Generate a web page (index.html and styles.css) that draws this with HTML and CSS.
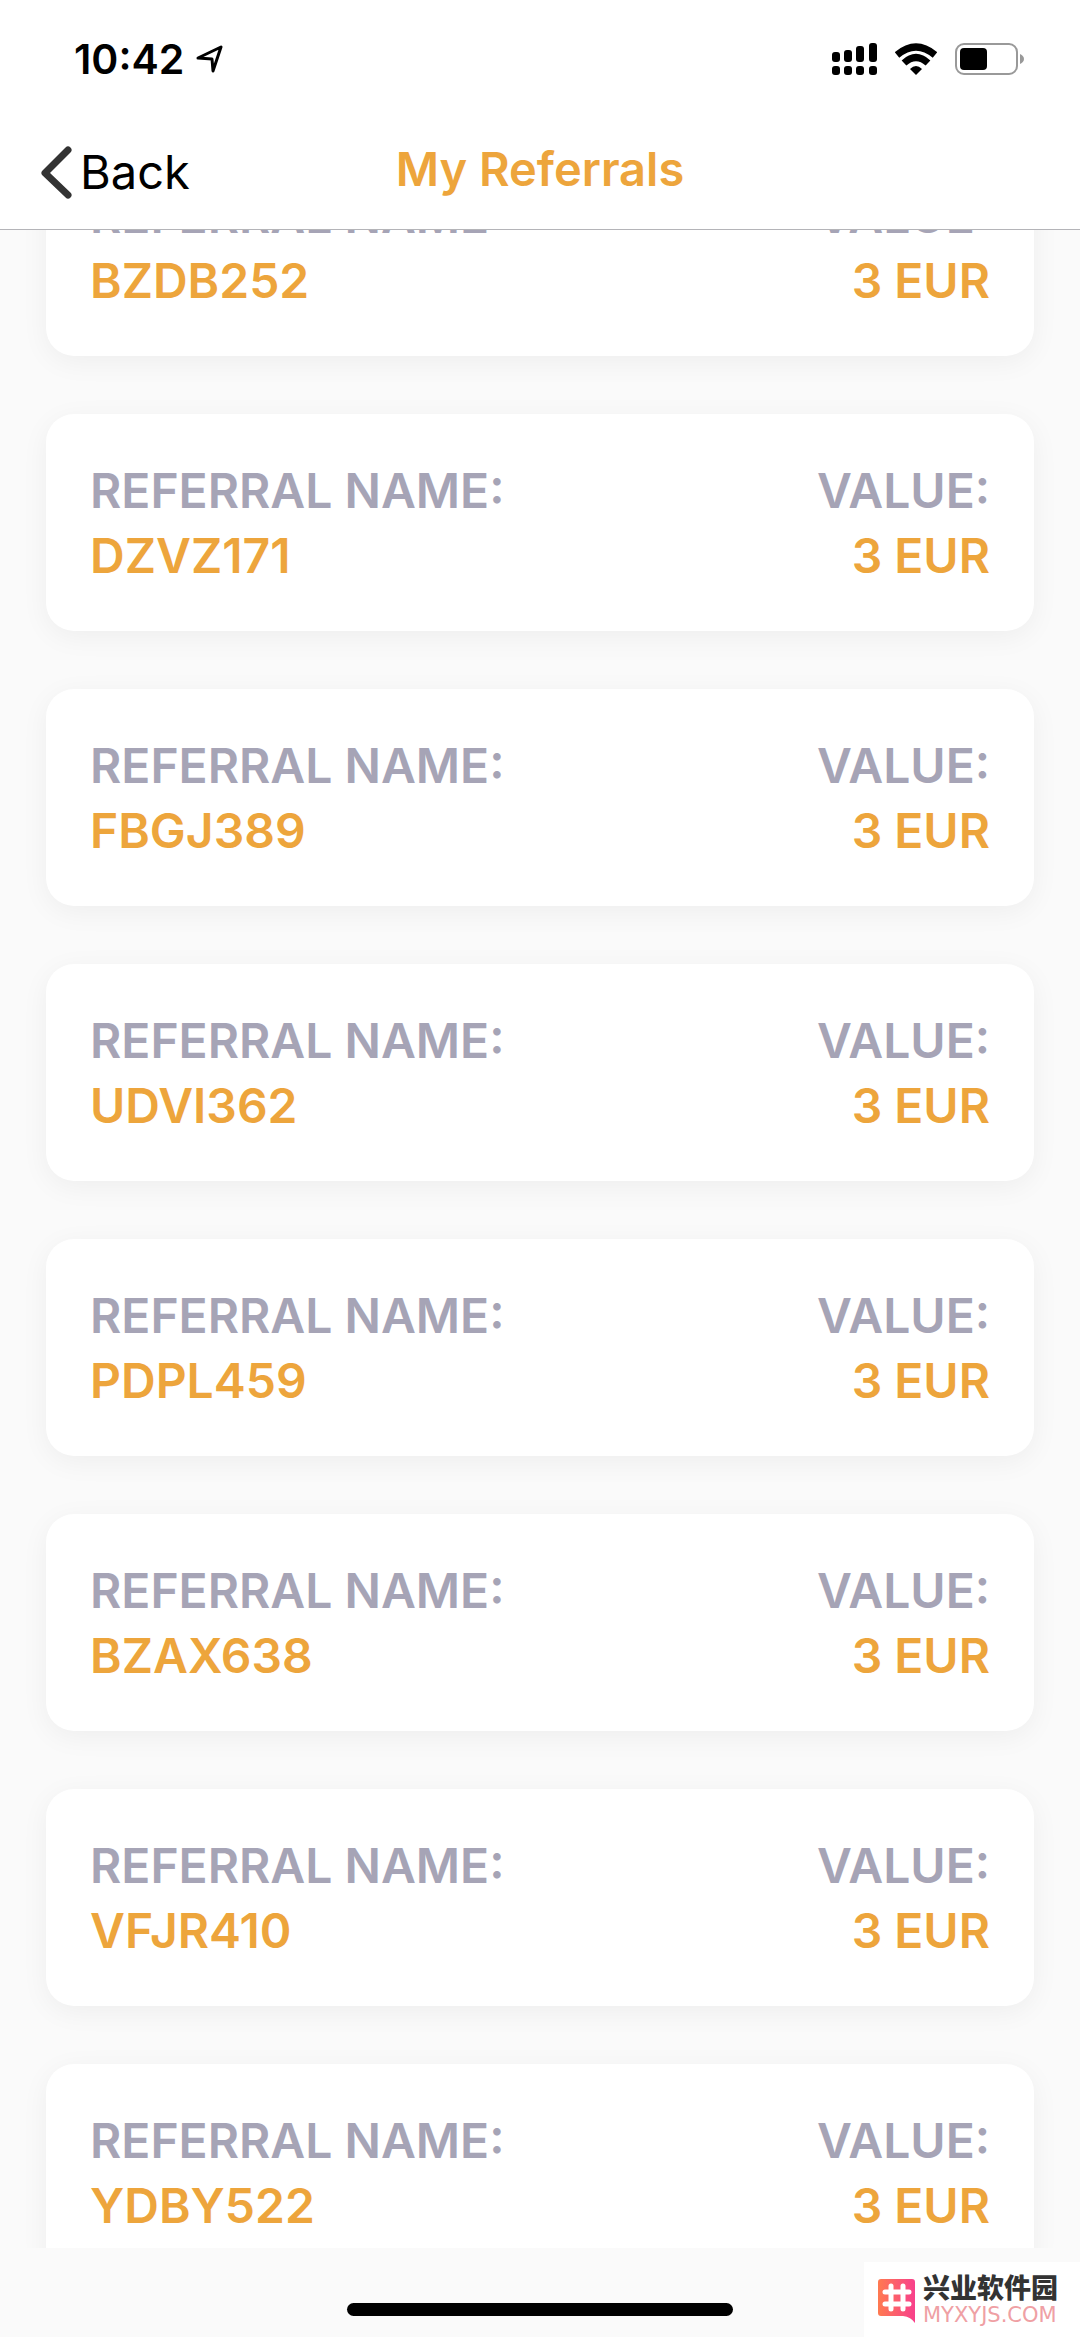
FILE: index.html
```html
<!DOCTYPE html>
<html lang="en">
<head>
    <meta charset="UTF-8">
    <meta name="viewport" content="width=device-width, initial-scale=1.0">
    <title>My Referrals</title>
    <link rel="stylesheet" href="styles.css">
</head>
<body>
    <header class="top">
        <div class="status-bar">
            <div class="status-left">
                <span class="clock">10:42</span>
                <svg class="icon-location" width="28" height="30" viewBox="0 0 28 30" fill="none" stroke="#000" stroke-width="3" stroke-linejoin="round">
                    <path d="M2 14L25 3L17 27L16 15Z"/>
                </svg>
            </div>
            <div class="status-right">
                <svg width="45" height="32" viewBox="0 0 45 32">
                    <rect x="0" y="9" width="8" height="10" rx="3"/>
                    <rect x="12" y="7" width="8" height="12" rx="3"/>
                    <rect x="24" y="3" width="8" height="16" rx="3"/>
                    <rect x="37" y="0" width="8" height="19" rx="3"/>
                    <rect x="0" y="23" width="8" height="9" rx="3"/>
                    <rect x="12" y="23" width="8" height="9" rx="3"/>
                    <rect x="24" y="23" width="8" height="9" rx="3"/>
                    <rect x="37" y="23" width="8" height="9" rx="3"/>
                </svg>
                <svg width="42" height="32" viewBox="0 0 42 32">
                    <path d="M2 12Q21 -4 40 12" fill="none" stroke="#000" stroke-width="7"/>
                    <path d="M9 20Q21 9 33 20" fill="none" stroke="#000" stroke-width="7"/>
                    <path d="M15 26Q21 20 27 26L21 32Z"/>
                </svg>
                <svg width="69" height="32" viewBox="0 0 69 32">
                    <rect x="1" y="1" width="61" height="30" rx="8" fill="none" stroke="#999" stroke-width="2"/>
                    <rect x="5" y="5" width="27" height="22" rx="4"/>
                    <path d="M65 11Q69 13 69 16Q69 19 65 21Z" fill="#999"/>
                </svg>
            </div>
        </div>
        <nav class="nav-bar">
            <a class="back" href="#">
                <svg width="32" height="54" viewBox="0 0 32 54" fill="none" stroke="#333" stroke-width="7" stroke-linecap="round" stroke-linejoin="round">
                    <path d="M28 5L5 28L28 50"/>
                </svg>
                <span>Back</span>
            </a>
            <h1>My Referrals</h1>
        </nav>
    </header>

    <main>
        <ul class="referrals">
            <li class="card">
                <div class="name"><p class="label">REFERRAL NAME:</p><p>BZDB252</p></div>
                <div class="value"><p class="label">VALUE:</p><p>3 EUR</p></div>
            </li>
            <li class="card">
                <div class="name"><p class="label">REFERRAL NAME:</p><p>DZVZ171</p></div>
                <div class="value"><p class="label">VALUE:</p><p>3 EUR</p></div>
            </li>
            <li class="card">
                <div class="name"><p class="label">REFERRAL NAME:</p><p>FBGJ389</p></div>
                <div class="value"><p class="label">VALUE:</p><p>3 EUR</p></div>
            </li>
            <li class="card">
                <div class="name"><p class="label">REFERRAL NAME:</p><p>UDVI362</p></div>
                <div class="value"><p class="label">VALUE:</p><p>3 EUR</p></div>
            </li>
            <li class="card">
                <div class="name"><p class="label">REFERRAL NAME:</p><p>PDPL459</p></div>
                <div class="value"><p class="label">VALUE:</p><p>3 EUR</p></div>
            </li>
            <li class="card">
                <div class="name"><p class="label">REFERRAL NAME:</p><p>BZAX638</p></div>
                <div class="value"><p class="label">VALUE:</p><p>3 EUR</p></div>
            </li>
            <li class="card">
                <div class="name"><p class="label">REFERRAL NAME:</p><p>VFJR410</p></div>
                <div class="value"><p class="label">VALUE:</p><p>3 EUR</p></div>
            </li>
            <li class="card">
                <div class="name"><p class="label">REFERRAL NAME:</p><p>YDBY522</p></div>
                <div class="value"><p class="label">VALUE:</p><p>3 EUR</p></div>
            </li>
        </ul>
    </main>

    <footer class="home-area">
        <div class="home-bar"></div>
        <div class="watermark">
            <svg width="37" height="44" viewBox="0 0 37 44">
                <defs>
                    <linearGradient id="badge" x1="0" y1="0" x2="1" y2="0">
                        <stop offset="0" stop-color="#ff7a50"/>
                        <stop offset="1" stop-color="#f8408c"/>
                    </linearGradient>
                </defs>
                <path d="M3 0H34Q37 0 37 3V44Q33 38 25 37H3Q0 37 0 34V3Q0 0 3 0Z" fill="url(#badge)"/>
                <path d="M13 7V30M25 7V30M7 13H31M7 25H31" fill="none" stroke="#fff" stroke-width="5" stroke-linecap="round"/>
            </svg>
            <div class="watermark-text">
                <span class="site-name" lang="zh-CN">兴业软件园</span>
                <span class="site-url">MYXYJS.COM</span>
            </div>
        </div>
    </footer>
</body>
</html>
```
FILE: styles.css
```css
:root {
    --orange: #EDA53C;
    --label: #A6A4B6;
    --page: #FAFAFA;
}

* {
    box-sizing: border-box;
}

body {
    margin: 0;
    height: 100vh;
    display: flex;
    flex-direction: column;
    background: var(--page);
    font-family: Inter, "Noto Sans CJK SC", sans-serif;
    overflow: hidden;
}

h1, p, ul {
    margin: 0;
    padding: 0;
}

/* header */
.top {
    flex: none;
    background: #fff;
    border-bottom: 1px solid #B4B4B8;
}

.status-bar {
    display: flex;
    justify-content: space-between;
    align-items: center;
    height: 118px;
    padding: 0 56px 0 74px;
}

.status-left {
    display: flex;
    align-items: center;
    gap: 12px;
}

.clock {
    font-size: 41px;
    font-weight: 600;
}

.status-right {
    display: flex;
    align-items: center;
    gap: 18px;
}

.nav-bar {
    display: grid;
    grid-template-columns: 1fr auto 1fr;
    align-items: center;
    height: 111px;
    padding: 0 40px 4px;
}

.back {
    display: flex;
    align-items: center;
    gap: 8px;
    color: #000;
    font-size: 47px;
    text-decoration: none;
}

h1 {
    padding-bottom: 6px;
    color: var(--orange);
    font-size: 47px;
    font-weight: 600;
}

/* list */
main {
    flex: 1;
    min-height: 0;
    overflow: hidden;
}

/* scrolled a little, first card sits partly under the header */
.referrals {
    display: flex;
    flex-direction: column;
    gap: 58px;
    margin-top: -91px;
    padding: 0 46px;
    list-style: none;
}

.card {
    display: flex;
    justify-content: space-between;
    padding: 44px 44px 43px;
    background: #fff;
    border-radius: 28px;
    box-shadow: 0 6px 28px rgba(0, 0, 0, 0.05);
    color: var(--orange);
    font-size: 48px;
    font-weight: 600;
    line-height: 65px;
}

.label {
    color: var(--label);
}

.value {
    text-align: right;
}

/* bottom */
.home-area {
    position: relative;
    flex: none;
    height: 89px;
    padding-top: 55px;
}

.home-bar {
    width: 386px;
    height: 13px;
    margin: 0 auto;
    border-radius: 7px;
    background: #000;
}

.watermark {
    position: absolute;
    right: 0;
    bottom: 0;
    display: flex;
    align-items: center;
    gap: 8px;
    width: 216px;
    height: 75px;
    padding: 2px 0 0 14px;
    background: #fff;
}

.watermark-text {
    display: flex;
    flex-direction: column;
}

.site-name {
    color: #333;
    font-family: "Noto Sans CJK SC", sans-serif;
    font-size: 27px;
    font-weight: 900;
    line-height: 28px;
}

.site-url {
    color: #EFA0A4;
    font-family: "DejaVu Sans", sans-serif;
    font-size: 21px;
    line-height: 28px;
}
```
